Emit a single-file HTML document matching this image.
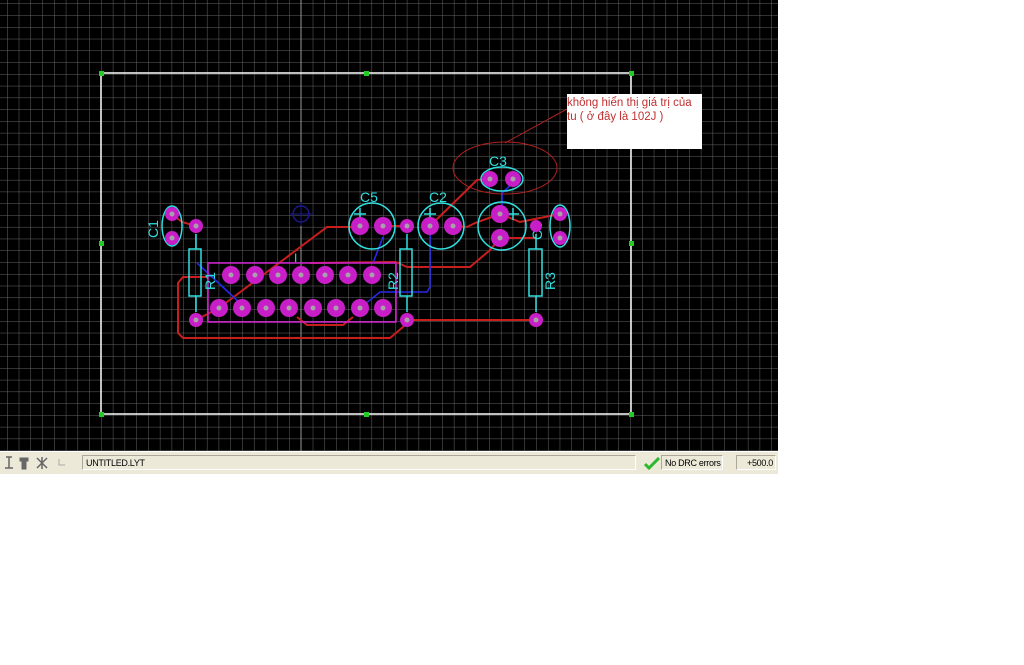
<!DOCTYPE html>
<html><head><meta charset="utf-8"><style>
html,body{margin:0;padding:0;background:#fff;width:1024px;height:665px;overflow:hidden;font-family:"Liberation Sans",sans-serif}
#pcb{position:absolute;left:0;top:0}
#bar{position:absolute;left:0;top:451px;width:778px;height:22px;background:#ece9d8;border-top:1px solid #fff}
.p{position:absolute;top:3px;height:15px;border:1px solid;border-color:#aca899 #fff #fff #aca899;font-size:9px;line-height:15px;color:#000;padding-left:3px;box-sizing:border-box;white-space:nowrap;overflow:hidden;letter-spacing:-0.3px}
</style></head><body>
<svg id="pcb" width="778" height="451" xmlns="http://www.w3.org/2000/svg">
<defs><pattern id="g" x="7" y="3.5" width="11.76" height="11.76" patternUnits="userSpaceOnUse"><path d="M0 0H11.76M0 0V11.76" stroke="#666" stroke-width="1" fill="none"/></pattern></defs>
<rect width="778" height="451" fill="#000"/>
<rect width="778" height="451" fill="url(#g)"/>
<line x1="301" y1="0" x2="301" y2="451" stroke="#999"/>
<rect x="101" y="73" width="530" height="341" fill="none" stroke="#fff" stroke-width="1.5"/>
<g fill="#2c2" ><rect x="99" y="71" width="5" height="5"/><rect x="364" y="71" width="5" height="5"/><rect x="629" y="71" width="5" height="5"/><rect x="99" y="241" width="5" height="5"/><rect x="629" y="241" width="5" height="5"/><rect x="99" y="412" width="5" height="5"/><rect x="364" y="412" width="5" height="5"/><rect x="629" y="412" width="5" height="5"/></g>
<g stroke="#c81e1e" stroke-width="2" fill="none">
<polyline points="219,308 327,227 360,227"/>
<polyline points="196,320 219,308"/>
<polyline points="207,277 183,277 178,283 178,333 183,338 390,338 403,327 407,320"/>
<polyline points="310,263 396,262 407,267 470,267 490,250 500,238"/>
<polyline points="297,317 307,325 343,325 353,317"/>
<polyline points="407,320 536,320"/>
<polyline points="453,226 467,227 475,223 500,214"/>
<polyline points="430,226 477,180 490,179"/>
<polyline points="500,238 536,238"/>
<polyline points="500,214 520,222 560,214"/>
<polyline points="172,214 182,222 196,226"/>
<line x1="383" y1="226" x2="407" y2="226"/>
</g>
<g stroke="#2828e8" stroke-width="1.6" fill="none">
<polyline points="197,263 240,303"/>
<polyline points="383,237 373,263"/>
<polyline points="360,308 380,292 427,292 430,287 430,233"/>
<polyline points="513,183 502,193 502,207"/>
</g>
<circle cx="301" cy="214" r="8" fill="none" stroke="#1a1a8a" stroke-width="1.5"/>
<line x1="289" y1="214" x2="313" y2="214" stroke="#1a1a8a"/><line x1="301" y1="202" x2="301" y2="226" stroke="#1a1a8a"/>
<rect x="208" y="263" width="188" height="59" fill="none" stroke="#d020d0" stroke-width="1.5"/>
<g stroke="#30e0e0" stroke-width="1.5" fill="none">
<ellipse cx="172" cy="226" rx="10" ry="20"/>
<rect x="189" y="249" width="12" height="47"/><line x1="196" y1="234" x2="196" y2="249"/><line x1="196" y1="296" x2="196" y2="312"/>
<rect x="400" y="249" width="12" height="47"/><line x1="407" y1="234" x2="407" y2="249"/><line x1="407" y1="296" x2="407" y2="312"/>
<rect x="529" y="249" width="13" height="47"/><line x1="536" y1="234" x2="536" y2="249"/><line x1="536" y1="296" x2="536" y2="312"/>
<circle cx="372" cy="226" r="23"/>
<circle cx="441" cy="226" r="23"/>
<circle cx="502" cy="226" r="24"/>
<ellipse cx="502" cy="179" rx="21" ry="12"/>
<ellipse cx="560" cy="226" rx="10" ry="21"/>
<path d="M354 214h12M360 208v12M424 214h12M430 208v12M507 214h12M513 208v12"/>
</g>
<g fill="#30e0e0" font-family="Liberation Sans" font-size="14">
<text x="360" y="202">C5</text><text x="429" y="202">C2</text><text x="489" y="166">C3</text>
<text x="294" y="262" font-size="12">I</text>
<text transform="translate(158,238) rotate(-90)">C1</text>
<text transform="translate(215,290) rotate(-90)">R1</text>
<text transform="translate(398,290) rotate(-90)">R2</text>
<text transform="translate(555,290) rotate(-90)">R3</text>
<text transform="translate(542,240) rotate(-90)">C4</text>
</g>
<g fill="#c81ec8">
<circle cx="172" cy="214" r="7"/><circle cx="172" cy="238" r="7"/>
<circle cx="196" cy="226" r="7"/><circle cx="196" cy="320" r="7"/>
<circle cx="407" cy="226" r="7"/><circle cx="407" cy="320" r="7"/><circle cx="536" cy="320" r="7"/><circle cx="536" cy="226" r="6"/>
<circle cx="360" cy="226" r="9"/><circle cx="383" cy="226" r="9"/>
<circle cx="430" cy="226" r="9"/><circle cx="453" cy="226" r="9"/>
<circle cx="490" cy="179" r="8"/><circle cx="513" cy="179" r="8"/>
<circle cx="500" cy="214" r="9"/><circle cx="500" cy="238" r="9"/>
<circle cx="560" cy="214" r="7"/><circle cx="560" cy="238" r="7"/>
<circle cx="231" cy="275" r="9"/><circle cx="255" cy="275" r="9"/><circle cx="278" cy="275" r="9"/><circle cx="301" cy="275" r="9"/><circle cx="325" cy="275" r="9"/><circle cx="348" cy="275" r="9"/><circle cx="372" cy="275" r="9"/>
<circle cx="219" cy="308" r="9"/><circle cx="242" cy="308" r="9"/><circle cx="266" cy="308" r="9"/><circle cx="289" cy="308" r="9"/><circle cx="313" cy="308" r="9"/><circle cx="336" cy="308" r="9"/><circle cx="360" cy="308" r="9"/><circle cx="383" cy="308" r="9"/>
</g>
<g fill="#a8a0a8">
<circle cx="172" cy="214" r="2.5"/><circle cx="172" cy="238" r="2.5"/><circle cx="196" cy="226" r="2.5"/><circle cx="196" cy="320" r="2.5"/><circle cx="407" cy="226" r="2.5"/><circle cx="407" cy="320" r="2.5"/><circle cx="536" cy="320" r="2.5"/>
<circle cx="360" cy="226" r="2.5"/><circle cx="383" cy="226" r="2.5"/><circle cx="430" cy="226" r="2.5"/><circle cx="453" cy="226" r="2.5"/><circle cx="490" cy="179" r="2.5"/><circle cx="513" cy="179" r="2.5"/><circle cx="500" cy="214" r="2.5"/><circle cx="500" cy="238" r="2.5"/><circle cx="560" cy="214" r="2.5"/><circle cx="560" cy="238" r="2.5"/>
<circle cx="231" cy="275" r="2.5"/><circle cx="255" cy="275" r="2.5"/><circle cx="278" cy="275" r="2.5"/><circle cx="301" cy="275" r="2.5"/><circle cx="325" cy="275" r="2.5"/><circle cx="348" cy="275" r="2.5"/><circle cx="372" cy="275" r="2.5"/>
<circle cx="219" cy="308" r="2.5"/><circle cx="242" cy="308" r="2.5"/><circle cx="266" cy="308" r="2.5"/><circle cx="289" cy="308" r="2.5"/><circle cx="313" cy="308" r="2.5"/><circle cx="336" cy="308" r="2.5"/><circle cx="360" cy="308" r="2.5"/><circle cx="383" cy="308" r="2.5"/>
</g>
<ellipse cx="505" cy="168" rx="52" ry="26" fill="none" stroke="#b02020" stroke-width="1"/>
<line x1="505" y1="143" x2="567" y2="109" stroke="#b02020"/>
<rect x="567" y="94" width="135" height="55" fill="#fff"/>
<text x="567" y="106" font-size="11.5" fill="#c03030" font-family="Liberation Sans">không hiển thị  giá trị của</text>
<text x="567" y="120" font-size="11.5" fill="#c03030" font-family="Liberation Sans">tu ( ở đây là 102J )</text>
</svg>
<div id="bar">
<svg style="position:absolute;left:2px;top:4px" width="70" height="14"><g stroke="#666" fill="#666"><path d="M4 1h6M7 1v11M3 12h8" fill="none" stroke-width="1.5"/><rect x="18" y="2" width="8" height="3"/><rect x="20" y="5" width="4" height="8"/><path d="M35 2l10 10M45 2l-10 10M40 1v12" fill="none" stroke-width="1.5"/><path d="M57 3v6h6" fill="none" stroke="#aaa"/></g></svg>
<div class="p" style="left:82px;width:554px;">UNTITLED.LYT</div>
<svg style="position:absolute;left:644px;top:5px" width="16" height="13"><path d="M1 7l4 4L15 1" stroke="#2eb82e" stroke-width="3" fill="none"/></svg>
<div class="p" style="left:661px;width:62px;">No DRC errors</div>
<div class="p" style="left:736px;width:40px;text-align:right;padding-right:2px">+500.0</div>
</div>
</body></html>
